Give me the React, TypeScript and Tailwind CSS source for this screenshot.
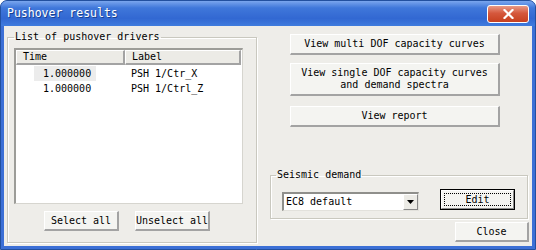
import type { ReactNode } from "react";

const mono = "font-['DejaVu_Sans_Mono',monospace] text-[10px] leading-[12px] text-black";

function Btn({ className, children }: { className?: string; children: ReactNode }) {
  return (
    <div
      className={`flex flex-col items-center justify-center whitespace-nowrap bg-[#f4f4f1] border-t border-l border-t-white border-l-white border-r-2 border-b-2 border-r-[#a3a3a3] border-b-[#a3a3a3] shrink-0 ${className ?? ""}`}
    >
      {children}
    </div>
  );
}

export default function App() {
  return (
    <div className="w-[536px] h-[250px] flex flex-col bg-[#3c70d6] border border-[#22509f] rounded-t-[7px] overflow-hidden">
      {/* title bar */}
      <div className="h-[25px] flex items-center bg-[linear-gradient(180deg,#7aa6ee_0%,#3f77da_28%,#3268d2_70%,#3f7cde_100%)] shrink-0">
        <span className="pl-[6px] font-['DejaVu_Sans_Mono',monospace] text-[11.5px] text-white [text-shadow:1px_1px_0_#17408f]">
          Pushover results
        </span>
        <div className="ml-auto mr-[6px] w-[42px] h-[18px] rounded-[3px] border border-white bg-[linear-gradient(180deg,#e99a86_0%,#d5583d_45%,#c7401f_100%)] flex items-center justify-center">
          <svg width="11" height="10" viewBox="0 0 11 10">
            <path d="M1.5 1 L9.5 9 M9.5 1 L1.5 9" stroke="white" strokeWidth="2.2" strokeLinecap="square" />
          </svg>
        </div>
      </div>

      {/* client area */}
      <div className={`flex-1 mx-[3px] mb-[3px] bg-[#eeede9] flex ${mono}`}>
        {/* left group */}
        <fieldset className="ml-[3px] mt-[5px] w-[250px] h-[212px] border border-[#c9c8bf] shadow-[inset_1px_1px_0_white,1px_1px_0_white] pt-[5px] shrink-0">
          <legend className="ml-[6px] px-[1px]">List of pushover drivers</legend>
          <div className="ml-[6px] w-[229px] h-[156px] bg-white border-t-2 border-l-2 border-t-[#9c9c98] border-l-[#9c9c98] border-b border-r border-b-[#d6d5cf] border-r-[#d6d5cf]">
            <div className="flex h-[15px]">
              <div className="w-[109px] pl-[6px] flex items-center bg-[#ecebe6] border-t border-l border-t-white border-l-white border-r-2 border-b-2 border-r-[#a3a3a3] border-b-[#a3a3a3]">
                Time
              </div>
              <div className="w-[116px] pl-[6px] flex items-center bg-[#ecebe6] border-t border-l border-t-white border-l-white border-r-2 border-b-2 border-r-[#a3a3a3] border-b-[#a3a3a3]">
                Label
              </div>
            </div>
            <div className="flex h-[16px] items-end">
              <div className="w-[109px] h-[15px] flex items-center">
                <span className="ml-[18px] h-[15px] pl-[9px] pr-[5px] flex items-center bg-[#ececec]">1.000000</span>
              </div>
              <div className="h-[15px] pl-[6px] flex items-center">PSH 1/Ctr_X</div>
            </div>
            <div className="flex h-[16px] items-center">
              <div className="w-[109px] flex items-center">
                <span className="ml-[27px]">1.000000</span>
              </div>
              <div className="pl-[6px]">PSH 1/Ctrl_Z</div>
            </div>
          </div>
          <div className="flex mt-[7px] ml-[36px] gap-[16px]">
            <Btn className="w-[75px] h-[20px]">Select all</Btn>
            <Btn className="w-[75px] h-[20px]">Unselect all</Btn>
          </div>
        </fieldset>

        {/* right column */}
        <div className="ml-[11px] flex-1 flex flex-col">
          <Btn className="ml-[22px] mt-[8px] w-[210px] h-[21px]">View multi DOF capacity curves</Btn>
          <Btn className="ml-[22px] mt-[8px] w-[210px] h-[33px]">
            <span>View single DOF capacity curves</span>
            <span>and demand spectra</span>
          </Btn>
          <Btn className="ml-[22px] mt-[10px] w-[210px] h-[21px]">View report</Btn>

          <fieldset className="ml-[2px] mt-[42px] w-[258px] border border-[#c9c8bf] shadow-[inset_1px_1px_0_white,1px_1px_0_white] pt-[8px] pb-[7px]">
            <legend className="ml-[5px] px-[1px]">Seismic demand</legend>
            <div className="flex items-start">
              <div className="ml-[11px] mt-[3px] w-[137px] h-[19px] flex bg-white border-t-2 border-l-2 border-t-[#8f8f8b] border-l-[#8f8f8b] border-b border-r border-b-[#e2e1dc] border-r-[#e2e1dc]">
                <span className="flex-1 pl-[2px] flex items-center">EC8 default</span>
                <div className="w-[15px] flex items-center justify-center bg-[#ecebe6] border-t border-l border-t-white border-l-white border-r border-b border-r-[#8a8a8a] border-b-[#8a8a8a]">
                  <svg width="7" height="4" viewBox="0 0 7 4">
                    <path d="M0 0 H7 L3.5 4 Z" fill="black" />
                  </svg>
                </div>
              </div>
              <div className="ml-[21px] w-[75px] h-[21px] border border-black flex">
                <div className="flex-1 flex bg-[#f4f4f1] border-t border-l border-t-white border-l-white border-r border-b border-r-[#8a8a8a] border-b-[#8a8a8a] p-[2px]">
                  <div className="flex-1 border border-dotted border-black flex items-center justify-center">Edit</div>
                </div>
              </div>
            </div>
          </fieldset>

          <Btn className="self-end mr-[3px] mt-[3px] w-[74px] h-[20px]">Close</Btn>
        </div>
      </div>
    </div>
  );
}
